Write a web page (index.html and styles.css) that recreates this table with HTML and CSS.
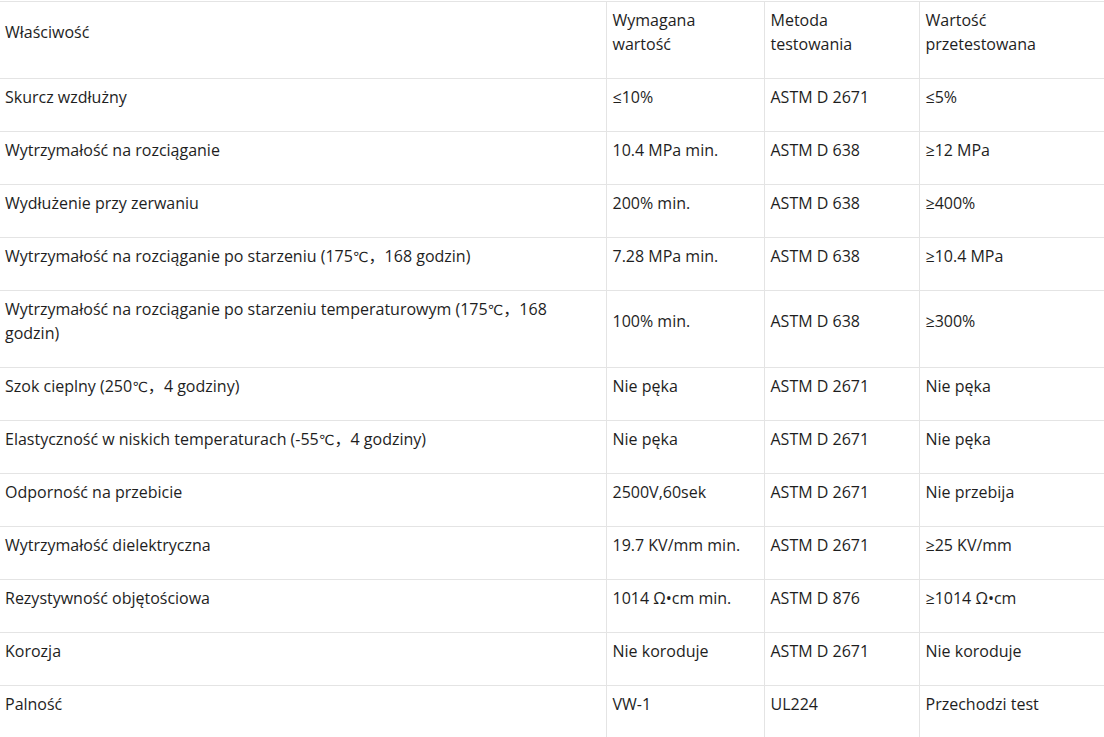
FILE: index.html
```html
<!DOCTYPE html>
<html lang="pl">
<head>
<meta charset="utf-8">
<title>Właściwości</title>
<link rel="stylesheet" href="styles.css">
</head>
<body>
<table class="spec">
  <colgroup>
    <col class="c1"><col class="c2"><col class="c3"><col class="c4">
  </colgroup>
  <tbody>
    <tr><td>Właściwość</td><td>Wymagana wartość</td><td>Metoda testowania</td><td>Wartość przetestowana</td></tr>
    <tr><td>Skurcz wzdłużny</td><td>≤10%</td><td>ASTM D 2671</td><td>≤5%</td></tr>
    <tr><td>Wytrzymałość na rozciąganie</td><td>10.4 MPa min.</td><td>ASTM D 638</td><td>≥12 MPa</td></tr>
    <tr><td>Wydłużenie przy zerwaniu</td><td>200% min.</td><td>ASTM D 638</td><td>≥400%</td></tr>
    <tr><td>Wytrzymałość na rozciąganie po starzeniu (175<span class="deg">℃</span><span class="cjk">，</span>168 godzin)</td><td>7.28 MPa min.</td><td>ASTM D 638</td><td>≥10.4 MPa</td></tr>
    <tr><td>Wytrzymałość na rozciąganie po starzeniu temperaturowym (175<span class="deg">℃</span><span class="cjk">，</span>168 godzin)</td><td>100% min.</td><td>ASTM D 638</td><td>≥300%</td></tr>
    <tr><td>Szok cieplny (250<span class="deg">℃</span><span class="cjk">，</span>4 godziny)</td><td>Nie pęka</td><td>ASTM D 2671</td><td>Nie pęka</td></tr>
    <tr><td>Elastyczność w niskich temperaturach (-55<span class="deg">℃</span><span class="cjk">，</span>4 godziny)</td><td>Nie pęka</td><td>ASTM D 2671</td><td>Nie pęka</td></tr>
    <tr><td>Odporność na przebicie</td><td>2500V,60sek</td><td>ASTM D 2671</td><td>Nie przebija</td></tr>
    <tr><td>Wytrzymałość dielektryczna</td><td>19.7 KV/mm min.</td><td>ASTM D 2671</td><td>≥25 KV/mm</td></tr>
    <tr><td>Rezystywność objętościowa</td><td>1014 Ω•cm min.</td><td>ASTM D 876</td><td>≥1014 Ω•cm</td></tr>
    <tr><td>Korozja</td><td>Nie koroduje</td><td>ASTM D 2671</td><td>Nie koroduje</td></tr>
    <tr><td>Palność</td><td>VW-1</td><td>UL224</td><td>Przechodzi test</td></tr>
  </tbody>
</table>
</body>
</html>
```
FILE: styles.css
```css
html, body {
  margin: 0;
  padding: 0;
  background: #ffffff;
}
body {
  font-family: "Open Sans", "Noto Sans CJK SC", sans-serif;
  font-size: 16px;
  line-height: 24px;
  color: #1e1e1e;
}
.spec {
  width: 1104px;
  border-collapse: collapse;
  table-layout: fixed;
  margin-top: 1px;
}
.c1 { width: 606px; }
.c2 { width: 158px; }
.c3 { width: 155px; }
.c4 { width: 185px; }
.spec td {
  border: 1px solid #e4e4e4;
  padding: 6px 6px 22px 6px;
  vertical-align: middle;
  text-align: left;
}
.spec td:first-child {
  border-left: none;
  padding-left: 5px;
}
.spec td:last-child {
  border-right: none;
}
.deg {
  font-family: "DejaVu Sans", sans-serif;
  font-size: 14px;
  line-height: 0;
}
.cjk {
  font-family: "Noto Sans CJK SC", sans-serif;
  font-size: 16px;
  line-height: 0;
}
```
